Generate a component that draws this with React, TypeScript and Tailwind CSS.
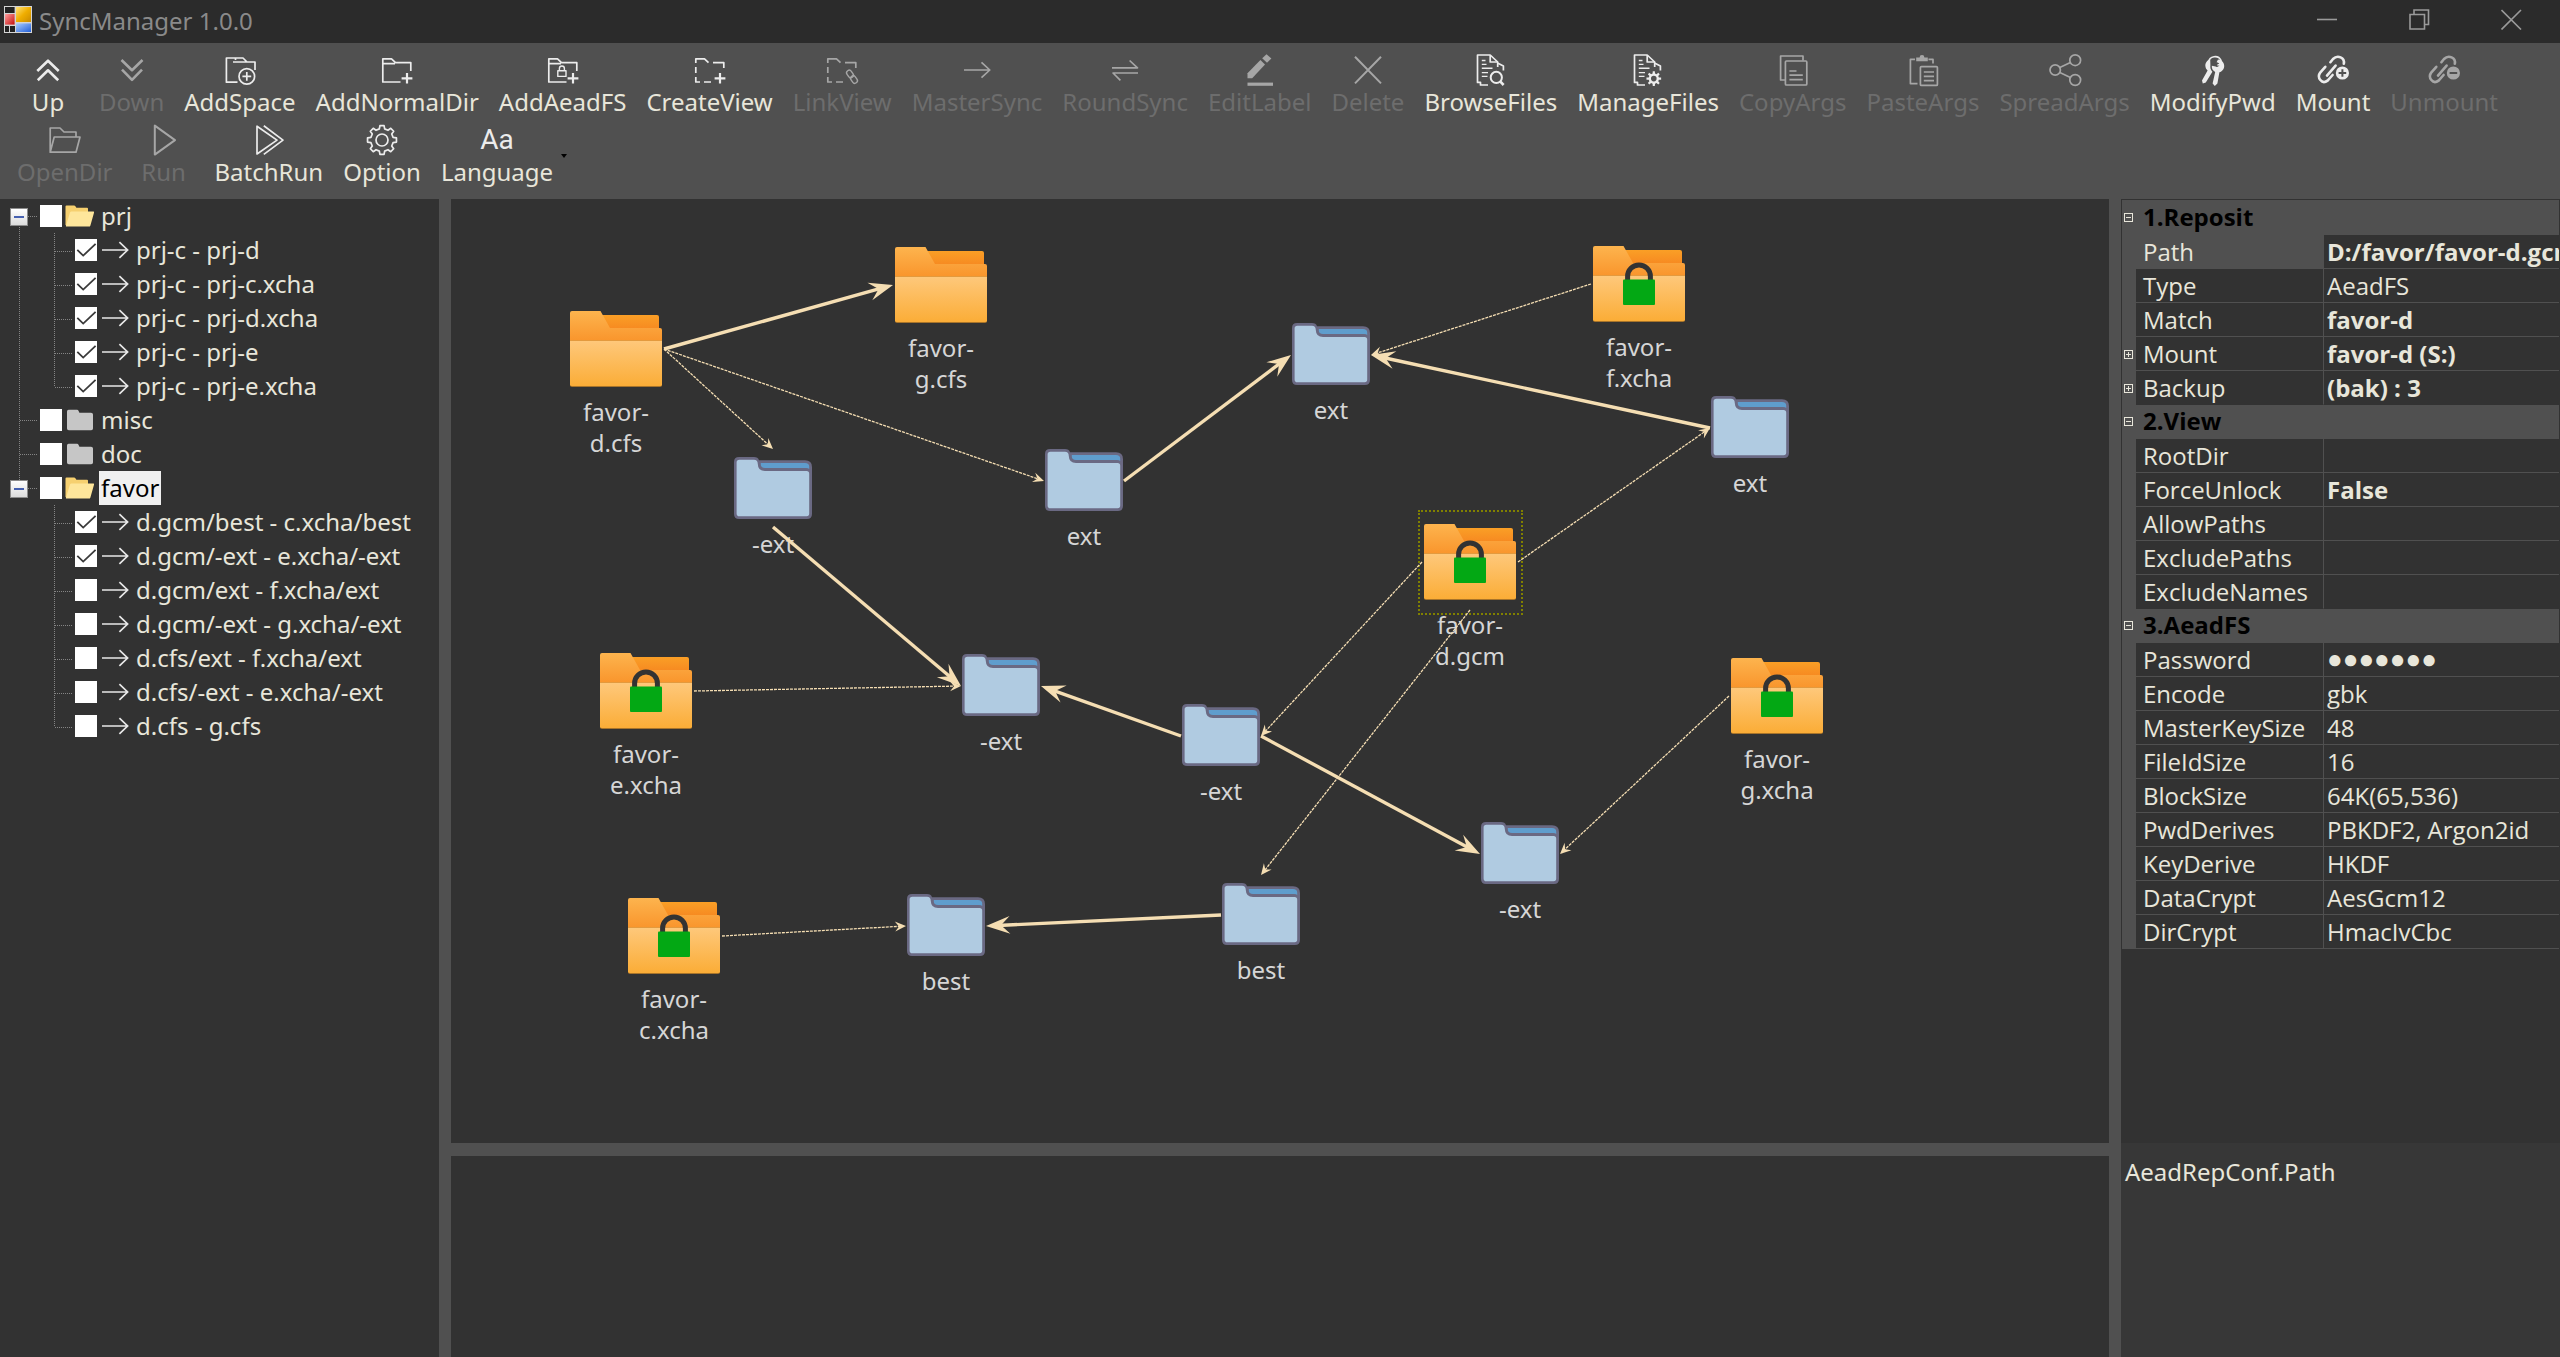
import React from "react";

/* ---------- Toolbar icons (32 x 32) ---------- */

function gear(cx: number, cy: number, outer: number, inner: number, teeth: number) {
  const step = (Math.PI * 2) / teeth;
  const pts: string[] = [];
  for (let i = 0; i < teeth; i++) {
    const a = i * step - Math.PI / 2;
    const corners: [number, number][] = [
      [a - step * 0.3, inner],
      [a - step * 0.18, outer],
      [a + step * 0.18, outer],
      [a + step * 0.3, inner],
    ];
    for (const [t, r] of corners) {
      pts.push(`${(cx + Math.cos(t) * r).toFixed(2)} ${(cy + Math.sin(t) * r).toFixed(2)}`);
    }
  }
  return `M${pts.join("L")}Z`;
}

const folderOutline = "M19.5 28H1.8V4.8H10.5L14.5 8.6H29.8V17M2 9.6H14";
const documentOutline = (
  <>
    <path d="M22.7 13V8L15.2 1H2.5V28.4H5.5V31H13" />
    <path d="M15.2 1V8H22.7M23 9.2L28.4 12V16.5" />
    <path d="M6.8 6.5H10.5M6.8 10.4H11.5M6.8 14.3H17.5M6.8 18.6H13M6.8 22.4H12.5" strokeWidth="1.4" />
  </>
);

const plusCorner = <path d="M26 19V29.6M20.6 24.3H31.4" strokeWidth="2.2" />;

const chain = (
  <g strokeWidth="2.6" strokeLinecap="round">
    <path d="M8.3 12.8L3.2 18.6C-0.4 23.4 4.8 31 10.6 26.6L15.6 21" />
    <path d="M10 21.6L18.6 11.6" />
    <path d="M13.4 8.2L16 5C20.6 0.4 28 3.6 26.8 9.8" />
  </g>
);

const icons: Record<string, React.ReactNode> = {
  Up: <path d="M5.3 17L16 6.7L26.7 17M5.8 26.3L16 16.3L26.2 26.3" strokeWidth="2.6" />,
  Down: <path d="M5.5 6L16 16.2L26.5 6M6 15.6L16 25.8L26 15.6" strokeWidth="2.6" />,
  AddSpace: (
    <>
      <path d="M13.5 28.2H2.4V4H19L23 8M31 16V8H9M11.5 4V6" />
      <circle cx="22.8" cy="22.4" r="7.8" />
      <path d="M22.8 18V26.8M18.4 22.4H27.2" />
    </>
  ),
  AddNormalDir: (
    <>
      <path d={folderOutline} />
      {plusCorner}
    </>
  ),
  AddAeadFS: (
    <>
      <path d={folderOutline} />
      <path d="M10.8 16.8H19V22.4H10.8ZM12.4 16.8V14.5A2.5 2.5 0 0 1 17.4 14.5V16.8" strokeWidth="1.4" />
      {plusCorner}
    </>
  ),
  CreateView: (
    <>
      <path d="M1.8 9V4.8H10.5L14.5 8.6M19 8.6H29.8V14M1.8 13V19M1.8 23V28H6M10 28H17" />
      {plusCorner}
    </>
  ),
  LinkView: (
    <>
      <path d="M1.8 9V4.8H10.5L14.5 8.6M19 8.6H29.8V14M1.8 13V19M1.8 23V28H6M10 28H17" />
      <rect x="-2.6" y="-4" width="5.2" height="8" rx="2.6" transform="translate(24 20) rotate(-35)" strokeWidth="1.4" />
      <rect x="-2.6" y="-4" width="5.2" height="8" rx="2.6" transform="translate(28 25.5) rotate(-35)" strokeWidth="1.4" />
    </>
  ),
  MasterSync: <path d="M3 16H28.5M20.5 8.3L28.8 16L20.5 23.7" />,
  RoundSync: <path d="M3 13.8H28.5L20.6 6.5M29 19H4L11.4 26.3" />,
  EditLabel: (
    <g fill="currentColor" stroke="none">
      <path d="M3.5 24.3V19.3L16.4 6L21 10.4L8.2 24.3Z" />
      <path d="M18.2 4.3L22.5 0.3L27.4 4.6L23 8.8Z" />
      <rect x="3.5" y="28.6" width="25.5" height="3.2" />
    </g>
  ),
  Delete: <path d="M3 2.8L29 29.4M29 2.8L3 29.4" strokeWidth="2" />,
  BrowseFiles: (
    <>
      {documentOutline}
      <circle cx="21.3" cy="23.4" r="5.6" strokeWidth="2" />
      <path d="M25.2 27.4L28.6 31" strokeWidth="2.6" />
    </>
  ),
  ManageFiles: (
    <>
      {documentOutline}
      <path
        d={`${gear(21.8, 24.6, 7.4, 5.2, 8)}M24.6 24.6A2.8 2.8 0 1 0 19 24.6A2.8 2.8 0 1 0 24.6 24.6Z`}
        fill="currentColor"
        fillRule="evenodd"
        stroke="none"
      />
    </>
  ),
  CopyArgs: (
    <>
      <path d="M8 26H3.6V2H26V6.5" />
      <rect x="8.4" y="7" width="21.4" height="24" rx="1" />
      <path d="M12.4 17H19.5M12.4 21.2H25.8M12.4 25.6H25.8" />
    </>
  ),
  PasteArgs: (
    <>
      <path d="M10.5 29.6H3.4V5.4H8M21.5 5.4H26V9.5" />
      <path d="M9.2 7.2V3.4H12.6A2.4 2.4 0 0 1 17.4 3.4H20.8V7.2Z" fill="currentColor" stroke="none" />
      <rect x="13.4" y="12.6" width="17" height="18.8" rx="1" />
      <path d="M16.8 18H27M16.8 22.3H27M16.8 26.6H27" />
    </>
  ),
  SpreadArgs: (
    <>
      <circle cx="6.2" cy="16" r="5.2" />
      <circle cx="26.2" cy="6.2" r="5.4" />
      <circle cx="26.2" cy="26" r="5.4" />
      <path d="M10.8 13.6L21.4 8.6M10.8 18.6L21.4 23.4" />
    </>
  ),
  ModifyPwd: (
    <>
      <path d="M11.5 8.5A6.6 6.6 0 0 1 24 6.4C24.5 9 22.4 11 20.4 11" strokeWidth="1.6" />
      <g fill="currentColor" stroke="none">
        <path d="M21 5.6C24.6 5.6 27.2 8.6 27.2 12C27.2 15.2 25 17.6 22.4 18.2L20.4 29.4L17.8 32L15.6 29.6L18.2 18C15.8 16.8 14.6 14.6 14.8 11.8L18.6 12.6C20 13.6 22.4 12.4 22.4 10.2C22.4 9 21 8.4 19.6 8.2Z" />
        <path d="M13.2 5.2C10 6.2 8 9 8.4 12.2C8.6 14 9.4 15.4 10.6 16.4L5 26.6L5.8 29.6L8.8 28.4L15.4 17.8C13.6 16 13 13.6 13.4 11Z" />
      </g>
    </>
  ),
  Mount: (
    <>
      {chain}
      <path
        d="M25.4 12.4A6.6 6.6 0 1 0 25.4 25.6A6.6 6.6 0 1 0 25.4 12.4ZM24.4 15.2H26.4V18H29.2V20H26.4V22.8H24.4V20H21.6V18H24.4Z"
        fill="currentColor"
        fillRule="evenodd"
        stroke="none"
      />
    </>
  ),
  Unmount: (
    <>
      {chain}
      <path
        d="M25.4 12.4A6.6 6.6 0 1 0 25.4 25.6A6.6 6.6 0 1 0 25.4 12.4ZM21.6 18H29.2V20H21.6Z"
        fill="currentColor"
        fillRule="evenodd"
        stroke="none"
      />
    </>
  ),
  OpenDir: <path d="M1.2 28V4H11L15 8H27V12.6M1.2 28.2L5.2 13H31L27 28.2Z" />,
  Run: <path d="M6.8 1.6V30.6L27 16.1Z" strokeWidth="2" />,
  BatchRun: <path d="M4 2.2V30L24 16.1ZM10.8 1.8L30 16.1L10.8 30.4" />,
  Option: (
    <>
      <path d={gear(16, 16, 14.6, 11.4, 8)} />
      <circle cx="16" cy="16" r="6" />
    </>
  ),
};

type Tool = { name: string; disabled?: boolean };

const toolRows: Tool[][] = [
  [
    { name: "Up" },
    { name: "Down", disabled: true },
    { name: "AddSpace" },
    { name: "AddNormalDir" },
    { name: "AddAeadFS" },
    { name: "CreateView" },
    { name: "LinkView", disabled: true },
    { name: "MasterSync", disabled: true },
    { name: "RoundSync", disabled: true },
    { name: "EditLabel", disabled: true },
    { name: "Delete", disabled: true },
    { name: "BrowseFiles" },
    { name: "ManageFiles" },
    { name: "CopyArgs", disabled: true },
    { name: "PasteArgs", disabled: true },
    { name: "SpreadArgs", disabled: true },
    { name: "ModifyPwd" },
    { name: "Mount" },
    { name: "Unmount", disabled: true },
  ],
  [
    { name: "OpenDir", disabled: true },
    { name: "Run", disabled: true },
    { name: "BatchRun" },
    { name: "Option" },
    { name: "Language" },
  ],
];

function ToolButton({ name, disabled }: Tool) {
  return (
    <button
      type="button"
      disabled={disabled}
      className="flex h-[70px] min-w-[62px] shrink-0 flex-col items-center text-[#ececec] disabled:text-[#a6a6a6]"
    >
      {name === "Language" ? (
        <span className="flex h-8 items-center font-['Roboto',sans-serif] text-[28px]" aria-hidden="true">
          Aa
        </span>
      ) : (
        <svg
          viewBox="0 0 32 32"
          className="h-8 w-8 overflow-visible"
          fill="none"
          stroke="currentColor"
          strokeWidth="1.7"
          strokeLinejoin="round"
          aria-hidden="true"
        >
          {icons[name]}
        </svg>
      )}
      <span className={disabled ? "leading-[32px] text-[#6d6d6d]" : "leading-[32px] text-[#e8e6da]"}>{name}</span>
    </button>
  );
}

function Toolbar() {
  return (
    <div role="toolbar" className="h-[156px] shrink-0 overflow-hidden bg-[#505050] pt-[11px] pl-[17px]">
      {toolRows.map((row, i) => (
        <div key={i} className="flex gap-5">
          {row.map((tool) => (
            <ToolButton key={tool.name} {...tool} />
          ))}
          {i === 1 && (
            <svg viewBox="0 0 6 4" className="mt-[30px] h-1 w-1.5 -ml-3" aria-hidden="true">
              <path d="M0 0H6L3 4Z" fill="#000" />
            </svg>
          )}
        </div>
      ))}
    </div>
  );
}

/* ---------- Title bar ---------- */

function TitleBar() {
  return (
    <header className="flex h-[43px] shrink-0 items-start bg-[#2b2b2b] text-[#8a8a8a]">
      <svg viewBox="0 0 28 27" className="mt-[6px] ml-1 h-[27px] w-7" aria-hidden="true">
        <defs>
          <linearGradient id="logoYellow" x2="1" y2="1">
            <stop offset="0" stopColor="#ffe27a" />
            <stop offset=".5" stopColor="#f0ae00" />
            <stop offset="1" stopColor="#c98a00" />
          </linearGradient>
          <linearGradient id="logoRed" x2="1" y2="1">
            <stop offset="0" stopColor="#ffa0a0" />
            <stop offset="1" stopColor="#c40d0d" />
          </linearGradient>
          <linearGradient id="logoBlue" x2="1" y2="1">
            <stop offset="0" stopColor="#a9cbff" />
            <stop offset="1" stopColor="#2360d8" />
          </linearGradient>
        </defs>
        <rect width="28" height="27" fill="#d4d4d4" />
        <rect x="1" y="1" width="9.6" height="6" fill="#222" />
        <rect x="1" y="8" width="9.6" height="10.6" fill="url(#logoRed)" />
        <rect x="1" y="20" width="4" height="6" fill="#222" />
        <rect x="6" y="20" width="5" height="6" fill="#222" />
        <rect x="12" y="1" width="15" height="15" fill="url(#logoYellow)" />
        <rect x="12" y="17.4" width="15" height="8.6" fill="url(#logoBlue)" />
      </svg>
      <h1 className="ml-[7px] flex-1 pt-1 leading-[34px]">SyncManager 1.0.0</h1>
      <div className="mr-[3px] flex">
        {[
          { label: "Minimize", d: "M0 10.5H20" },
          { label: "Restore", d: "M1 5.5H15.5V20H1ZM5 5.5V1H19.5V15.5H15.5" },
          { label: "Close", d: "M0.5 1L20 20.5M20 1L0.5 20.5" },
        ].map(({ label, d }) => (
          <button key={label} type="button" aria-label={label} className="flex h-[38px] w-[92px] items-center justify-center">
            <svg viewBox="0 0 21 21" className="h-[21px] w-[21px]" fill="none" stroke="#9a9a9a" strokeWidth="1.6">
              <path d={d} />
            </svg>
          </button>
        ))}
      </div>
    </header>
  );
}

/* ---------- Sync tree ---------- */

type Leaf = { label: string; checked: boolean };
type Branch = { label: string; open?: boolean; selected?: boolean; children: Leaf[] };

const tree: Branch[] = [
  {
    label: "prj",
    open: true,
    children: [
      { label: "prj-c - prj-d", checked: true },
      { label: "prj-c - prj-c.xcha", checked: true },
      { label: "prj-c - prj-d.xcha", checked: true },
      { label: "prj-c - prj-e", checked: true },
      { label: "prj-c - prj-e.xcha", checked: true },
    ],
  },
  { label: "misc", children: [] },
  { label: "doc", children: [] },
  {
    label: "favor",
    open: true,
    selected: true,
    children: [
      { label: "d.gcm/best - c.xcha/best", checked: true },
      { label: "d.gcm/-ext - e.xcha/-ext", checked: true },
      { label: "d.gcm/ext - f.xcha/ext", checked: false },
      { label: "d.gcm/-ext - g.xcha/-ext", checked: false },
      { label: "d.cfs/ext - f.xcha/ext", checked: false },
      { label: "d.cfs/-ext - e.xcha/-ext", checked: false },
      { label: "d.cfs - g.cfs", checked: false },
    ],
  },
];

function CheckBox({ id, checked }: { id: string; checked: boolean }) {
  return (
    <span className="relative h-[22px] w-[22px] shrink-0">
      <input id={id} type="checkbox" defaultChecked={checked} className="peer block h-[22px] w-[22px] appearance-none bg-white" />
      <svg
        viewBox="0 0 22 22"
        className="pointer-events-none absolute inset-0 hidden h-[22px] w-[22px] peer-checked:block"
        fill="none"
        stroke="#3a3a3a"
        strokeWidth="1.8"
      >
        <path d="M2.3 10.8L8.2 16.6L20.6 4.8" />
      </svg>
    </span>
  );
}

function Guides({ d, wide }: { d: string; wide?: boolean }) {
  return (
    <svg
      className={wide ? "h-[34px] w-[75px] shrink-0" : "h-[34px] w-10 shrink-0"}
      fill="none"
      stroke="#858585"
      strokeDasharray="1 1"
      shapeRendering="crispEdges"
      aria-hidden="true"
    >
      <path d={d} />
    </svg>
  );
}

function BranchRow({ branch, first, last }: { branch: Branch; first: boolean; last: boolean }) {
  const id = `branch-${branch.label}`;
  const up = first ? "" : "M19.5 0V18";
  const down = last ? "" : "M19.5 18V34";
  return (
    <div className="flex h-[34px] items-center">
      <span className="relative shrink-0">
        <Guides d={`${up}${down}M20 17.5H37`} />
        {branch.open && (
          <button
            type="button"
            aria-label={`Collapse ${branch.label}`}
            className="absolute top-[9px] left-[10px] flex h-[18px] w-[18px] items-center justify-center border border-[#8c8c8c] bg-linear-to-b from-white to-[#dcdcdc]"
          >
            <span className="h-0.5 w-[10px] bg-[#4560b0]" />
          </button>
        )}
      </span>
      <CheckBox id={id} checked={false} />
      {branch.open ? (
        <svg viewBox="0 0 30 22" className="ml-[3px] h-[22px] w-[30px] shrink-0" aria-hidden="true">
          <path d="M.5 20V1.4Q.5.4 1.5.4H9Q10 .4 10.4 1.2L11.4 2.8H22Q23 2.8 23 3.8V8L10 21H2Z" fill="#f6d06f" />
          <path d="M6.4 6.6H28.4Q29.4 6.6 29 7.8L25.4 20.4Q25 21.6 24 21.6H1.6Q.6 21.6 1 20.4L5 7.6Q5.4 6.6 6.4 6.6Z" fill="#fee69b" />
        </svg>
      ) : (
        <svg viewBox="0 0 30 22" className="ml-[3px] h-[22px] w-[30px] shrink-0" aria-hidden="true">
          <path
            d="M2 2.4Q2 .8 3.6 .8H12Q13.2 .8 13.6 2L14.4 3.8H26Q28 3.8 28 5.6V19.4Q28 21.2 26.2 21.2H3.8Q2 21.2 2 19.4Z"
            fill="#c6c6c6"
          />
        </svg>
      )}
      <label
        htmlFor={id}
        className={branch.selected ? "ml-1 bg-[#f0f0f0] pr-0.5 pl-0.5 leading-[34px] text-black" : "ml-1 pl-0.5 leading-[34px]"}
      >
        {branch.label}
      </label>
    </div>
  );
}

function LeafRow({ leaf, index, parent, trunk, last }: { leaf: Leaf; index: number; parent: string; trunk: boolean; last: boolean }) {
  const id = `leaf-${parent}-${index}`;
  const stem = last ? "M54.5 0V18" : "M54.5 0V34";
  return (
    <div className="flex h-[34px] items-center">
      <Guides wide d={`${trunk ? "M19.5 0V34" : ""}${stem}M55 18.5H73`} />
      <CheckBox id={id} checked={leaf.checked} />
      <svg
        viewBox="0 0 27 18"
        className="ml-[5px] h-[18px] w-[27px] shrink-0"
        fill="none"
        stroke="#e8e8e8"
        strokeWidth="1.7"
        aria-hidden="true"
      >
        <path d="M0 9H25.5M17.4 1.2L25.6 9L17.4 16.8" />
      </svg>
      <label htmlFor={id} className="ml-[7px] leading-[34px] whitespace-nowrap">
        {leaf.label}
      </label>
    </div>
  );
}

function SyncTree() {
  return (
    <nav aria-label="Sync groups" className="w-[439px] shrink-0 overflow-hidden text-[#e8e6da]">
      {tree.map((branch, b) => (
        <div key={branch.label}>
          <BranchRow branch={branch} first={b === 0} last={b === tree.length - 1} />
          {branch.children.map((leaf, i) => (
            <LeafRow
              key={leaf.label}
              leaf={leaf}
              index={i}
              parent={branch.label}
              trunk={b < tree.length - 1}
              last={i === branch.children.length - 1}
            />
          ))}
        </div>
      ))}
    </nav>
  );
}

/* ---------- Graph canvas ---------- */

type Kind = "repo" | "locked" | "view";
/* x is the centre of the icon and y its top edge, in canvas coordinates. */
type Node = { id: string; label: string; kind: Kind; x: number; y: number; selected?: boolean };
type Side = "left" | "right" | "top" | "bottom";
type Edge = { from: string; fromSide: Side; to: string; toSide: Side; thick?: boolean };

const nodes: Node[] = [
  { id: "d.cfs", label: "favor-d.cfs", kind: "repo", x: 165, y: 112 },
  { id: "g.cfs", label: "favor-g.cfs", kind: "repo", x: 490, y: 48 },
  { id: "f.xcha", label: "favor-f.xcha", kind: "locked", x: 1188, y: 47 },
  { id: "d.gcm", label: "favor-d.gcm", kind: "locked", x: 1019, y: 325, selected: true },
  { id: "e.xcha", label: "favor-e.xcha", kind: "locked", x: 195, y: 454 },
  { id: "g.xcha", label: "favor-g.xcha", kind: "locked", x: 1326, y: 459 },
  { id: "c.xcha", label: "favor-c.xcha", kind: "locked", x: 223, y: 699 },
  { id: "d.cfs/-ext", label: "-ext", kind: "view", x: 322, y: 258 },
  { id: "d.cfs/ext", label: "ext", kind: "view", x: 633, y: 250 },
  { id: "f.xcha/ext", label: "ext", kind: "view", x: 880, y: 124 },
  { id: "d.gcm/ext", label: "ext", kind: "view", x: 1299, y: 197 },
  { id: "e.xcha/-ext", label: "-ext", kind: "view", x: 550, y: 455 },
  { id: "d.gcm/-ext", label: "-ext", kind: "view", x: 770, y: 505 },
  { id: "g.xcha/-ext", label: "-ext", kind: "view", x: 1069, y: 623 },
  { id: "c.xcha/best", label: "best", kind: "view", x: 495, y: 695 },
  { id: "d.gcm/best", label: "best", kind: "view", x: 810, y: 684 },
];

const edges: Edge[] = [
  { from: "d.cfs", fromSide: "right", to: "g.cfs", toSide: "left", thick: true },
  { from: "d.cfs", fromSide: "right", to: "d.cfs/-ext", toSide: "top" },
  { from: "d.cfs", fromSide: "right", to: "d.cfs/ext", toSide: "left" },
  { from: "d.cfs/-ext", fromSide: "bottom", to: "e.xcha/-ext", toSide: "left", thick: true },
  { from: "d.cfs/ext", fromSide: "right", to: "f.xcha/ext", toSide: "left", thick: true },
  { from: "f.xcha", fromSide: "left", to: "f.xcha/ext", toSide: "right" },
  { from: "d.gcm/ext", fromSide: "left", to: "f.xcha/ext", toSide: "right", thick: true },
  { from: "d.gcm", fromSide: "right", to: "d.gcm/ext", toSide: "left" },
  { from: "d.gcm", fromSide: "left", to: "d.gcm/-ext", toSide: "right" },
  { from: "d.gcm", fromSide: "bottom", to: "d.gcm/best", toSide: "top" },
  { from: "d.gcm/best", fromSide: "left", to: "c.xcha/best", toSide: "right", thick: true },
  { from: "c.xcha", fromSide: "right", to: "c.xcha/best", toSide: "left" },
  { from: "e.xcha", fromSide: "right", to: "e.xcha/-ext", toSide: "left" },
  { from: "d.gcm/-ext", fromSide: "left", to: "e.xcha/-ext", toSide: "right", thick: true },
  { from: "d.gcm/-ext", fromSide: "right", to: "g.xcha/-ext", toSide: "left", thick: true },
  { from: "g.xcha", fromSide: "left", to: "g.xcha/-ext", toSide: "right" },
];

function anchor(id: string, side: Side): [number, number] {
  const node = nodes.find((n) => n.id === id)!;
  const small = node.kind === "view";
  const half = small ? 40 : 48;
  if (side === "left") return [node.x - half, node.y + (small ? 32 : 38)];
  if (side === "right") return [node.x + half, node.y + (small ? 32 : 38)];
  if (side === "top") return [node.x, node.y - 8];
  return [node.x, node.y + (small ? 70 : 86)];
}

function EdgeLine({ edge }: { edge: Edge }) {
  const [x1, y1] = anchor(edge.from, edge.fromSide);
  const [x2, y2] = anchor(edge.to, edge.toSide);
  const length = Math.hypot(x2 - x1, y2 - y1);
  const back = edge.thick ? 12 : 5;
  const angle = (Math.atan2(y2 - y1, x2 - x1) * 180) / Math.PI;
  return (
    <g>
      <line
        x1={x1}
        y1={y1}
        x2={x2 - ((x2 - x1) / length) * back}
        y2={y2 - ((y2 - y1) / length) * back}
        strokeWidth={edge.thick ? 3.4 : 1.3}
        strokeDasharray={edge.thick ? undefined : "3 1"}
      />
      <path
        d={edge.thick ? "M0 0L-24 -9L-15 0L-24 9Z" : "M0 0L-11 -5L-7 0L-11 5Z"}
        transform={`translate(${x2} ${y2}) rotate(${angle})`}
        fill="#f5deb3"
        stroke="none"
      />
    </g>
  );
}

function RepoIcon({ locked }: { locked: boolean }) {
  return (
    <svg viewBox="0 0 92 76" className="h-[76px] w-[92px]" aria-hidden="true">
      <path d="M28 4H87Q89 4 89 6V24H28Z" fill="url(#repoBack)" />
      <path d="M2 0H30.5L40 17H90Q92 17 92 19V30H0V2Q0 0 2 0Z" fill="url(#repoTop)" />
      <path d="M0 31H92V74Q92 76 90 76H2Q0 76 0 74Z" fill="#a8742a" />
      <path d="M0 29.5H92V73.5Q92 75 90 75H2Q0 75 0 73.5Z" fill="url(#repoFront)" />
      <path d="M0 29.5H92" stroke="#e39a3e" />
      {locked && (
        <>
          <path d="M34.6 34V30.4A11.4 11.4 0 0 1 57.4 30.4V34" fill="none" stroke="#333" strokeWidth="5" />
          <rect x="30" y="33.4" width="32" height="25.6" rx="1" fill="#03a814" />
        </>
      )}
    </svg>
  );
}

function ViewIcon() {
  return (
    <svg viewBox="0 0 78 62" className="h-[62px] w-[78px]" aria-hidden="true">
      <path d="M5 0H20Q24 0 25 3.2H71Q78 3.2 78 10V57Q78 62 73 62H5Q0 62 0 57V5Q0 0 5 0Z" fill="#6a6983" />
      <path d="M26.8 6H71Q75.2 6 75.2 9.6V12Q74.4 11 72 11H31Q26.8 11 26.8 7.6Z" fill="#5f9dcd" />
      <path
        d="M5.4 2.8H20Q23.6 2.8 23.8 7Q24 14 31 14H72.6Q75.2 14 75.2 16.6V56.6Q75.2 59.2 72.6 59.2H5.4Q2.6 59.2 2.6 56.4V5.6Q2.6 2.8 5.4 2.8Z"
        fill="#b0cbe1"
      />
    </svg>
  );
}

function GraphCanvas() {
  return (
    <main className="relative flex-1 overflow-hidden bg-[#323232] text-[#d6d6d6]">
      {nodes.map((node) => (
        <button
          key={node.id}
          type="button"
          className="absolute flex w-[110px] flex-col items-center gap-[9px] leading-[31px]"
          style={{ left: node.x - 55, top: node.y }}
        >
          {node.selected && (
            <span className="absolute -top-[14px] left-[3px] h-[105px] w-[105px] border-2 border-dotted border-[#808000]" />
          )}
          {node.kind === "view" ? <ViewIcon /> : <RepoIcon locked={node.kind === "locked"} />}
          <span>{node.label}</span>
        </button>
      ))}
      <svg className="pointer-events-none absolute inset-0 h-full w-full" fill="none" stroke="#f5deb3" aria-hidden="true">
        <defs>
          <linearGradient id="repoBack" x2="0" y2="1">
            <stop offset="0" stopColor="#fa9f26" />
            <stop offset="1" stopColor="#f5801f" />
          </linearGradient>
          <linearGradient id="repoTop" x2="0" y2="1">
            <stop offset="0" stopColor="#fdb44e" />
            <stop offset="1" stopColor="#f9952c" />
          </linearGradient>
          <linearGradient id="repoFront" x2="0" y2="1">
            <stop offset="0" stopColor="#fec87b" />
            <stop offset="1" stopColor="#fbad37" />
          </linearGradient>
        </defs>
        {edges.map((edge) => (
          <EdgeLine key={`${edge.from}>${edge.to}`} edge={edge} />
        ))}
      </svg>
    </main>
  );
}

/* ---------- Property grid ---------- */

type Prop = { name: string; value?: string; bold?: boolean; expandable?: boolean; selected?: boolean; secret?: boolean };

const groups: { title: string; rows: Prop[] }[] = [
  {
    title: "1.Reposit",
    rows: [
      { name: "Path", value: "D:/favor/favor-d.gcm", bold: true, selected: true },
      { name: "Type", value: "AeadFS" },
      { name: "Match", value: "favor-d", bold: true },
      { name: "Mount", value: "favor-d (S:)", bold: true, expandable: true },
      { name: "Backup", value: "(bak) : 3", bold: true, expandable: true },
    ],
  },
  {
    title: "2.View",
    rows: [
      { name: "RootDir" },
      { name: "ForceUnlock", value: "False", bold: true },
      { name: "AllowPaths" },
      { name: "ExcludePaths" },
      { name: "ExcludeNames" },
    ],
  },
  {
    title: "3.AeadFS",
    rows: [
      { name: "Password", value: "●●●●●●●", secret: true },
      { name: "Encode", value: "gbk" },
      { name: "MasterKeySize", value: "48" },
      { name: "FileIdSize", value: "16" },
      { name: "BlockSize", value: "64K(65,536)" },
      { name: "PwdDerives", value: "PBKDF2, Argon2id" },
      { name: "KeyDerive", value: "HKDF" },
      { name: "DataCrypt", value: "AesGcm12" },
      { name: "DirCrypt", value: "HmacIvCbc" },
    ],
  },
];

function Expander({ label, plus }: { label: string; plus?: boolean }) {
  return (
    <button type="button" aria-label={`${plus ? "Expand" : "Collapse"} ${label}`} className="mx-auto block h-[9px] w-[10px]">
      <svg viewBox="0 0 9 9" className="h-[9px] w-[9px]" fill="none" stroke="#e8e6da" shapeRendering="crispEdges">
        <path d={plus ? "M.5 .5H8.5V8.5H.5ZM2 4.5H7M4.5 2V7" : "M.5 .5H8.5V8.5H.5ZM2 4.5H7"} />
      </svg>
    </button>
  );
}

function PropertyGrid() {
  return (
    <div className="flex-1 overflow-hidden border-t border-r border-l border-[#323232] bg-[#323232] font-['Open_Sans',sans-serif] text-[#e8e6da]">
      <table className="w-full table-fixed border-separate border-spacing-0 border-t border-[#505050] leading-[33px]">
        <colgroup>
          <col className="w-[14px]" />
          <col className="w-[188px]" />
          <col />
        </colgroup>
        {groups.map((group, g) => (
          <tbody key={group.title}>
            <tr className="h-[34px] bg-[#505050]">
              <td className="p-0 pb-0.5">
                <Expander label={group.title} />
              </td>
              <th colSpan={2} scope="colgroup" className="h-[34px] p-0 pb-0.5 pl-[7px] text-left leading-[32px] font-bold text-black">
                {group.title}
              </th>
            </tr>
            {group.rows.map((row, r) => {
              const dark = r === group.rows.length - 1 && g < groups.length - 1;
              return (
                <tr key={row.name} className="h-[34px]">
                  <td className="bg-[#505050] p-0">{row.expandable && <Expander label={row.name} plus />}</td>
                  <th
                    scope="row"
                    className={`border-r border-b border-r-[#505050] p-0 pl-[7px] text-left font-normal ${
                      dark ? "border-b-[#323232]" : "border-b-[#505050]"
                    } ${row.selected ? "bg-[#505050]" : ""}`}
                  >
                    {row.name}
                  </th>
                  <td
                    className={`overflow-hidden border-b p-0 pl-[3px] whitespace-nowrap ${
                      dark ? "border-b-[#323232]" : "border-b-[#505050]"
                    } ${row.bold ? "font-bold" : ""} ${row.secret ? "font-['Liberation_Sans',sans-serif] text-[26px]" : ""}`}
                  >
                    {row.selected ? (
                      <input
                        aria-label={row.name}
                        defaultValue={row.value}
                        className="block h-[33px] w-full bg-transparent font-bold outline-none"
                      />
                    ) : (
                      row.value
                    )}
                  </td>
                </tr>
              );
            })}
          </tbody>
        ))}
      </table>
    </div>
  );
}

export default function App() {
  return (
    <div className="flex h-screen flex-col overflow-hidden bg-[#323232] font-['Noto_Sans',sans-serif] text-[24px]">
      <TitleBar />
      <Toolbar />
      <div className="flex min-h-0 flex-1">
        <SyncTree />
        <div className="w-3 shrink-0 bg-[#505050]" />
        <div className="flex min-w-0 flex-1 flex-col">
          <GraphCanvas />
          <div className="h-[13px] shrink-0 bg-[#505050]" />
          <section aria-label="Log" className="h-[201px] shrink-0 bg-[#323232]" />
        </div>
        <div className="w-3 shrink-0 bg-[#505050]" />
        <aside className="flex w-[439px] shrink-0 flex-col">
          <PropertyGrid />
          <p className="h-[214px] shrink-0 bg-[#373737] pt-3 pl-1 leading-[34px] text-[#e8e6da]">AeadRepConf.Path</p>
        </aside>
      </div>
    </div>
  );
}
